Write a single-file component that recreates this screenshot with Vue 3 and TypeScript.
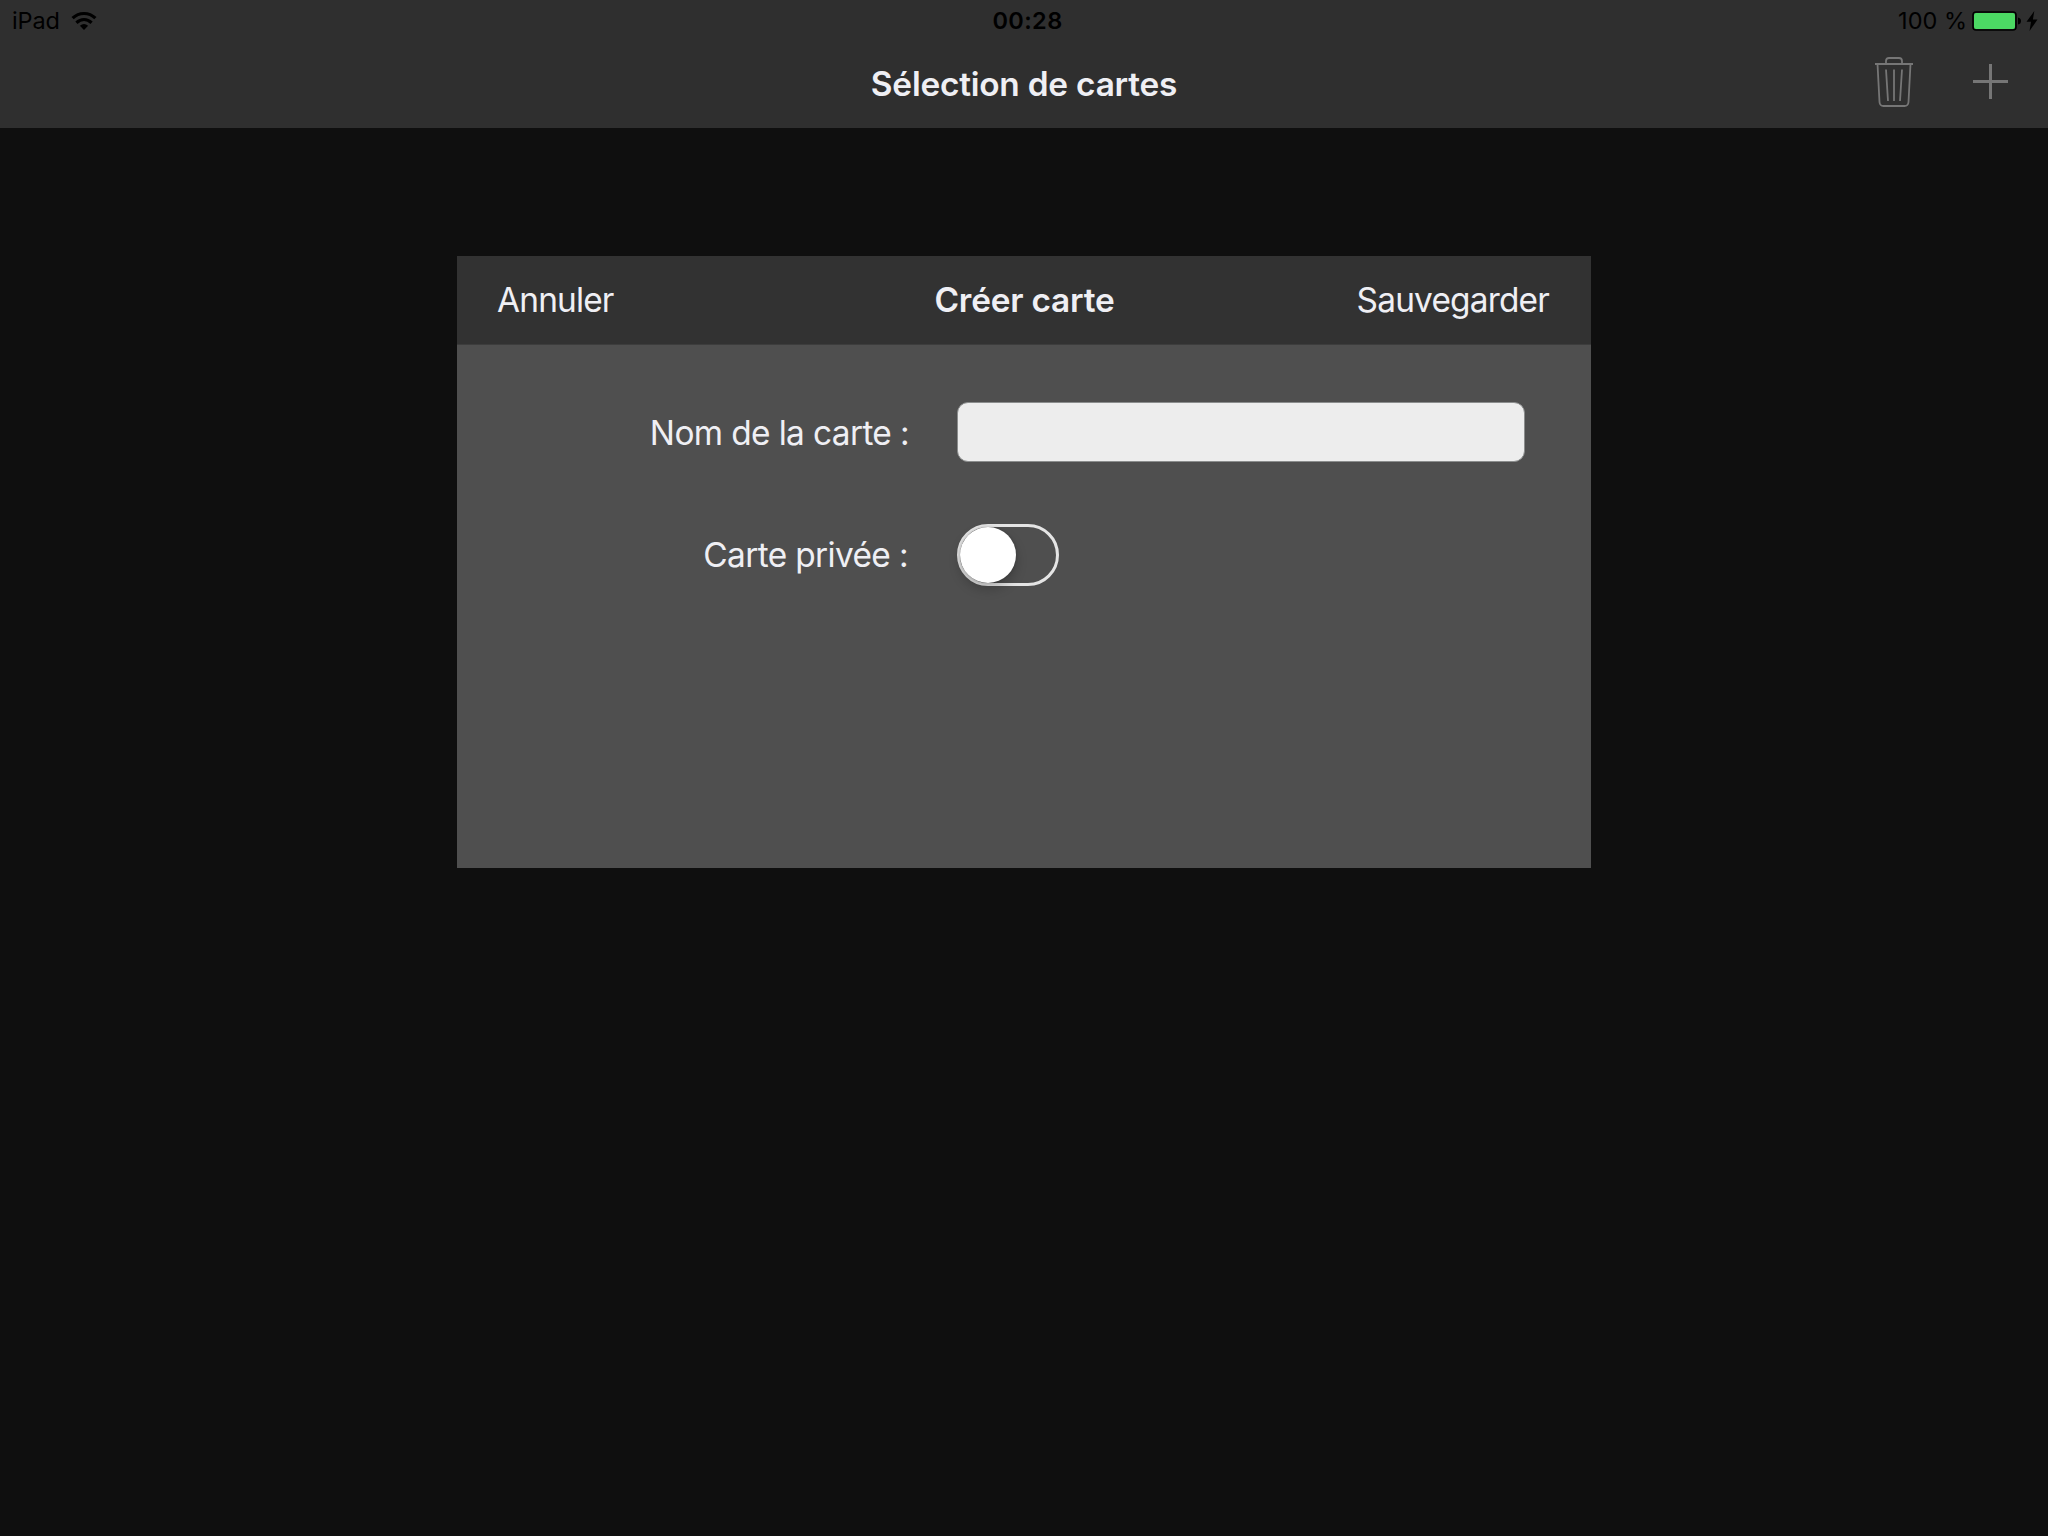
<script setup lang="ts">
import { ref } from 'vue'

const device = 'iPad'
const time = '00:28'
const battery = '100 %'
const mapName = ref('')
const isPrivate = ref(false)
</script>

<template>
  <div class="screen">
    <header class="top">
      <div class="status">
        <div class="status-side">
          <span class="device">{{ device }}</span>
          <svg class="wifi" width="26" height="20" viewBox="0 0 26 20">
            <path d="M1.6 7.2C8 .9 18 .9 24.4 7.2" fill="none" stroke="#000" stroke-width="3.2" />
            <path d="M5.4 11.7C10 7.5 16 7.5 20.6 11.7" fill="none" stroke="#000" stroke-width="3.2" />
            <path d="M8.9 14.8Q13 11.4 17.1 14.8L13 19Z" fill="#000" />
          </svg>
        </div>
        <span class="time">{{ time }}</span>
        <div class="status-side end">
          <span class="percent">{{ battery }}</span>
          <svg class="battery" width="50" height="20" viewBox="0 0 50 20">
            <rect x="1" y="1" width="43" height="18" rx="3" fill="#2f2f2f" stroke="#000" stroke-width="1.6" />
            <rect x="2" y="2" width="41" height="16" rx="2" fill="#4cd964" />
            <path d="M46 6.5Q49 7 49 10T46 13.5Z" fill="#000" />
          </svg>
          <svg class="bolt" width="12" height="20" viewBox="0 0 12 20">
            <path d="M8.3 0 .5 10.8H5L3.5 20 11.5 8.4H6.9Z" fill="#000" />
          </svg>
        </div>
      </div>
      <div class="nav">
        <h1 class="title">Sélection de cartes</h1>
        <div class="actions">
          <svg class="trash" width="38" height="52" viewBox="0 0 38 52" fill="none" stroke="#767676" stroke-width="1.8">
            <path d="M0 8H38M11 8V5Q11 2 14 2H24Q27 2 27 5V8M2.5 8 4.5 46Q4.8 50 8.5 50H29.5Q33.2 50 33.5 46L35.5 8M11 13.5 13 45M19 13.5V45M27 13.5 25 45" />
          </svg>
          <svg width="35" height="35" viewBox="0 0 35 35" fill="none" stroke="#767676" stroke-width="3">
            <path d="M0 17.5H35M17.5 0V35" />
          </svg>
        </div>
      </div>
    </header>

    <main class="dialog">
      <div class="dialog-head">
        <button class="cancel">Annuler</button>
        <h2 class="heading">Créer carte</h2>
        <button class="save">Sauvegarder</button>
      </div>
      <div class="form">
        <div class="row">
          <label class="label name" for="map-name">Nom de la carte :</label>
          <input id="map-name" v-model="mapName" class="field" type="text" />
        </div>
        <div class="row switch-row">
          <span class="label private">Carte privée :</span>
          <button class="switch" role="switch" :aria-checked="isPrivate" @click="isPrivate = !isPrivate">
            <span class="thumb" :class="{ on: isPrivate }"></span>
          </button>
        </div>
      </div>
    </main>
  </div>
</template>

<style>
body { background: #0f0f0f; overflow: hidden; }
</style>

<style scoped>
* { box-sizing: border-box; }
.screen { width: 2048px; height: 1536px; background: #0f0f0f; color: #efeff4; font-family: Inter, "Liberation Sans", sans-serif; font-size: 33.4px; }
.top { height: 128px; background: #2f2f2f; }
.status { height: 42px; display: grid; grid-template-columns: 1fr auto 1fr; align-items: center; padding: 1px 10px 1px 12px; color: #000; font-size: 23.5px; line-height: 40px; }
.status-side { display: flex; align-items: center; }
.end { justify-content: flex-end; }
.device { letter-spacing: -.1px; }
.wifi { margin-left: 11px; }
.time { font-weight: 600; letter-spacing: .4px; padding-left: 5px; }
.battery { margin-left: 5px; }
.bolt { margin-left: 4px; }
.nav { height: 86px; display: grid; grid-template-columns: 1fr auto 1fr; align-items: center; padding-bottom: 2px; }
.title { grid-column: 2; margin: 0; font-size: 33.4px; line-height: 84px; font-weight: 600; letter-spacing: -.22px; }
.actions { display: flex; justify-content: flex-end; align-items: center; gap: 60px; padding: 0 40px 5px 0; }
.trash { margin-top: 1px; }
.dialog { width: 1134px; height: 612px; margin: 128px 0 0 457px; background: #4f4f4f; }
.dialog-head { height: 89px; display: grid; grid-template-columns: 1fr auto 1fr; align-items: center; padding: 0 42px 0 40px; background: #323232; border-bottom: 1px solid #3d3d3d; }
button { border: 0; padding: 0; background: none; font: inherit; color: inherit; white-space: nowrap; }
.cancel { justify-self: start; letter-spacing: -.82px; }
.save { justify-self: end; letter-spacing: -.8px; }
.heading { margin: 0; padding-left: 3px; font-size: 33.4px; font-weight: 600; letter-spacing: -.2px; }
.form { padding-top: 57px; }
.row { height: 60px; display: flex; align-items: center; }
.switch-row { height: 62px; margin-top: 62px; }
.label { width: 451px; margin-right: 49px; text-align: right; white-space: nowrap; letter-spacing: -.62px; }
.name { width: 452px; margin-right: 48px; padding-top: 2px; }
.field { width: 568px; height: 60px; padding: 0 14px; border: 1px solid #8b8d8d; border-radius: 11px; background: #ededed; font: inherit; color: #111; outline: 0; }
.switch { width: 102px; height: 62px; border: 3px solid #e5e5e5; border-radius: 31px; display: flex; }
.thumb { width: 56px; height: 56px; border-radius: 50%; background: #fff; box-shadow: 0 6px 12px rgba(0,0,0,.22), 0 0 3px rgba(0,0,0,.2); }
.thumb.on { margin-left: 40px; }
</style>
